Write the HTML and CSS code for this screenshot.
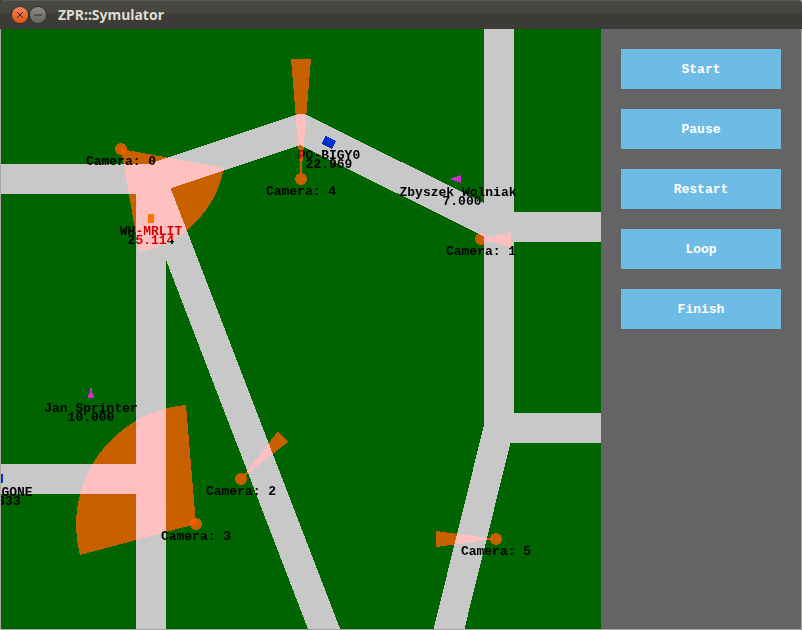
FILE: index.html
```html
<!DOCTYPE html>
<html lang="pl">
<head>
<meta charset="utf-8">
<title>ZPR::Symulator</title>
<link rel="stylesheet" href="styles.css">
</head>
<body>
<div class="window">
  <header class="titlebar">
    <div class="window-buttons">
      <button class="round close" type="button" aria-label="Close"><svg viewBox="0 0 16 16" width="16" height="16"><path d="M5 5l6 6M11 5l-6 6"/></svg></button>
      <button class="round minimize" type="button" aria-label="Minimize"><svg viewBox="0 0 16 16" width="16" height="16"><path d="M4 8h8"/></svg></button>
    </div>
    <h1 class="title">ZPR::Symulator</h1>
  </header>
  <main class="content">
    <svg class="map" viewBox="0 0 600 600" role="img" aria-label="Map">
      <defs>
        <g id="beams">
          <path d="M120 120L223 139A105 105 0 0 1 138 223Z"/>
          <path d="M480 210L510 203V218Z"/>
          <path d="M240 450L277 402L287 413Z"/>
          <path d="M195 495L79 526A120 120 0 0 1 185 376Z"/>
          <path d="M300 150L290 30H310Z"/>
          <path d="M495 510L435 502V518Z"/>
        </g>
        <g id="lamps">
          <circle cx="120" cy="120" r="6"/>
          <circle cx="480" cy="210" r="6"/>
          <circle cx="240" cy="450" r="6"/>
          <circle cx="195" cy="495" r="6"/>
          <circle cx="300" cy="150" r="6"/>
          <circle cx="495" cy="510" r="6"/>
        </g>
      </defs>
      <rect class="grass" width="600" height="600"/>
      <g class="roads">
        <path d="M0 150H150"/>
        <path d="M0 450H150"/>
        <path d="M150 150V600"/>
        <path d="M150 150L350 670"/>
        <path d="M150 150L300 100L498 198"/>
        <path d="M498 0V399"/>
        <path d="M498 198H600"/>
        <path d="M498 399H600"/>
        <path d="M498 398L443 620"/>
      </g>
      <g class="vehicles">
        <rect class="orange" x="147" y="185" width="6" height="9"/>
        <rect class="blue" x="322" y="109" width="12" height="9" transform="rotate(26 328 113)"/>
        <rect class="blue" x="-4" y="445" width="6" height="9"/>
        <path class="person" d="M450 149h2l5-2h2v-1h1v8h-1v-1h-2l-5-2h-2z"/>
        <path class="person" d="M89 359h2v4l2 4v2h-6v-2l2-4z"/>
      </g>
      <g class="label">
        <text x="150" y="206">WH-MRLIT</text>
        <text x="150" y="215">25.114</text>
        <text x="328" y="130">PO-BIGY0</text>
        <text x="328" y="139">22.969</text>
        <text x="457" y="167">Zbyszek Wolniak</text>
        <text x="461" y="176">7.000</text>
        <text x="90" y="383">Jan Sprinter</text>
        <text x="90" y="392">10.000</text>
        <text x="16" y="467">GONE</text>
        <text x="8" y="476">333</text>
      </g>
      <use class="shade" href="#beams"/>
      <use class="light" href="#beams"/>
      <use class="shade" href="#lamps"/>
      <use class="light" href="#lamps"/>
      <g class="label">
        <text x="120" y="136">Camera: 0</text>
        <text x="480" y="226">Camera: 1</text>
        <text x="240" y="466">Camera: 2</text>
        <text x="195" y="511">Camera: 3</text>
        <text x="300" y="166">Camera: 4</text>
        <text x="495" y="526">Camera: 5</text>
      </g>
    </svg>
    <nav class="controls" aria-label="Simulation">
      <button class="action" type="button">Start</button>
      <button class="action" type="button">Pause</button>
      <button class="action" type="button">Restart</button>
      <button class="action" type="button">Loop</button>
      <button class="action" type="button">Finish</button>
    </nav>
  </main>
</div>
</body>
</html>
```
FILE: styles.css
```css
* { box-sizing: border-box; }

body {
  margin: 0;
  background: linear-gradient(90deg, #3c3b37 50%, #8cc4d8 50%);
}

.window {
  border-radius: 4px 4px 0 0;
  overflow: hidden;
}

.titlebar {
  display: flex;
  align-items: center;
  gap: 12px;
  height: 29px;
  padding: 0 12px;
  background: linear-gradient(#494843, #464540 40%, #3d3b37 55%, #3c3b37);
  box-shadow: inset 0 1px #5a5954;
}

.window-buttons {
  display: flex;
  gap: 2px;
}

.round {
  width: 16px;
  height: 16px;
  padding: 0;
  border: 0;
  border-radius: 50%;
  box-shadow: 0 0 0 1px #33322e;
}

.round svg {
  display: block;
  fill: none;
  stroke: #3c2a22;
}

.close { background: linear-gradient(#f4845c, #e35410); }
.minimize { background: linear-gradient(#8c8b84, #65645e); }

.title {
  margin: 0;
  color: #dfdbd2;
  font: bold 14px/20px "Noto Sans", sans-serif;
}

.content {
  display: grid;
  grid-template-columns: 1fr 200px;
  border: 1px solid #a8a5a2;
  border-top: 0;
  background: #646464;
}

.map {
  display: block;
  width: 100%;
  isolation: isolate;
  shape-rendering: crispEdges;
}

.grass { fill: #006400; }

.roads {
  fill: none;
  stroke: #c8c8c8;
  stroke-width: 30;
  stroke-linejoin: round;
}

.orange { fill: #ff7800; }
.blue { fill: #0032c8; }
.person { fill: #c832c8; }

/* Camera light is added to whatever lies under it, slightly dimmed. */
.shade {
  fill: #000;
  opacity: 0.04;
}

.light {
  fill: #c80000;
  mix-blend-mode: plus-lighter;
}

.label {
  font: bold 13px "Liberation Mono", monospace;
  text-anchor: middle;
}

.controls {
  display: flex;
  flex-direction: column;
  gap: 20px;
  padding: 20px;
}

.action {
  height: 40px;
  padding: 0;
  border: 0;
  background: #6ebce6;
  color: #fff;
  font: bold 13px "Liberation Mono", monospace;
}
```
